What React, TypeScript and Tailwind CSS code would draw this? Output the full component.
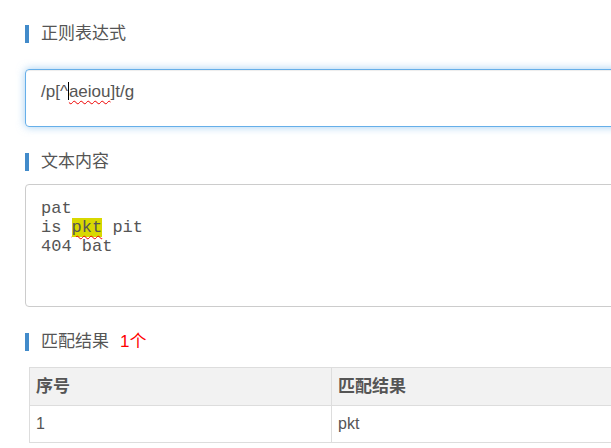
import React from "react";

const sans = "font-['Liberation_Sans','Noto_Sans_CJK_SC',sans-serif]";

function Heading({ title, extra }: { title: string; extra?: string }) {
  return (
    <div className="flex items-center h-[18px]">
      <div className="w-[4px] h-[18px] bg-[#428bca]" />
      <span className="ml-[12px] text-[17px] leading-[18px] text-[#555]">{title}</span>
      {extra && <span className="ml-[11px] text-[17px] leading-[18px] text-[#f00]">{extra}</span>}
    </div>
  );
}

const spell = "underline decoration-wavy decoration-[#e00] decoration-1 underline-offset-[3px]";

export default function App() {
  const rows = [{ idx: "1", value: "pkt" }];

  return (
    <div className={`w-[611px] h-[448px] overflow-hidden bg-white ${sans}`}>
      <div className="w-[660px] pl-[25px] pt-[25px]">
        <Heading title="正则表达式" />
        <div className="mt-[26px] h-[58px] rounded-[4px] border border-[#66afe9] shadow-[inset_0_1px_1px_rgba(0,0,0,0.075),0_0_8px_rgba(102,175,233,0.6)] pl-[15px] pt-[12px] text-[17px] leading-[19px] text-[#555]">
          /p[^
          <span className="inline-block w-px h-[18px] bg-black align-[-3px]" />
          <span className={spell}>aeiou</span>]t/g
        </div>

        <div className="mt-[26px]">
          <Heading title="文本内容" />
        </div>
        <div className="mt-[13px] h-[123px] rounded-[4px] border border-[#ccc] pl-[15px] pt-[14px] font-['Liberation_Mono',monospace] text-[17px] leading-[19px] text-[#555] whitespace-pre">
          <div>pat</div>
          <div>
            is <span className={`bg-[#d8d800] ${spell}`}>pkt</span> pit
          </div>
          <div>404 bat</div>
        </div>

        <div className="mt-[26px]">
          <Heading title="匹配结果" extra="1个" />
        </div>
        <div className="mt-[16px] ml-[4px] grid grid-cols-[302px_302px] border-l border-t border-[#ddd] text-[#555]">
          <div className="h-[38px] flex items-center pl-[6px] bg-[#f2f2f2] border-r border-b border-[#ddd] text-[17px] font-bold">序号</div>
          <div className="h-[38px] flex items-center pl-[6px] bg-[#f2f2f2] border-r border-b border-[#ddd] text-[17px] font-bold">匹配结果</div>
          {rows.map((r) => (
            <React.Fragment key={r.idx}>
              <div className="h-[37px] flex items-center pl-[6px] border-r border-b border-[#ddd] text-[16px]">{r.idx}</div>
              <div className="h-[37px] flex items-center pl-[6px] border-r border-b border-[#ddd] text-[16px]">{r.value}</div>
            </React.Fragment>
          ))}
        </div>
      </div>
    </div>
  );
}
